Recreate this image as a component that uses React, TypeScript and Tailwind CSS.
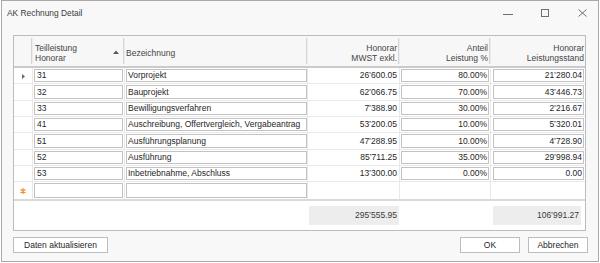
import React from "react";

const rows = [
  ["31", "Vorprojekt", "26’600.05", "80.00%", "21’280.04"],
  ["32", "Bauprojekt", "62’066.75", "70.00%", "43’446.73"],
  ["33", "Bewilligungsverfahren", "7’388.90", "30.00%", "2’216.67"],
  ["41", "Auschreibung, Offertvergleich, Vergabeantrag", "53’200.05", "10.00%", "5’320.01"],
  ["51", "Ausführungsplanung", "47’288.95", "10.00%", "4’728.90"],
  ["52", "Ausführung", "85’711.25", "35.00%", "29’998.94"],
  ["53", "Inbetriebnahme, Abschluss", "13’300.00", "0.00%", "0.00"],
];

const heights = ["h-[16px]", "h-[17px]", "h-[16px]", "h-[16px]", "h-[17px]", "h-[16px]", "h-[16px]", "h-[17px]"];

function Box({ children, right = false, pad = "px-[2px]" }: { children?: React.ReactNode; right?: boolean; pad?: string }) {
  return (
    <div
      className={`h-full border border-[#c2c2c2] bg-white flex items-center ${pad} whitespace-nowrap overflow-hidden ${
        right ? "justify-end" : ""
      }`}
    >
      {children}
    </div>
  );
}

function HeaderCell({
  w,
  children,
  right = false,
  divider = true,
  pad = "",
}: {
  w: string;
  children?: React.ReactNode;
  right?: boolean;
  divider?: boolean;
  pad?: string;
}) {
  return (
    <div className={`${w} flex items-stretch shrink-0`}>
      <div className={`flex-1 flex items-center pt-[3px] leading-[10px] ${right ? "justify-end text-right" : ""} ${pad}`}>
        {children}
      </div>
      {divider && <div className="w-[2px] my-[2px] bg-[#d6d6d6] border-r border-[#ececec]" />}
    </div>
  );
}

export default function App() {
  return (
    <div className="w-[600px] h-[263px] bg-white font-['Liberation_Sans',Arial,sans-serif] text-[8.5px] text-[#262626]">
      <div className="ml-px w-[598px] h-[262px] border border-[#a9a9a9] bg-[#f8f8f8] flex flex-col">
        {/* Title bar */}
        <div className="h-[24px] flex items-center pl-[5px] pr-[11px] shrink-0">
          <span className="text-[8.4px] text-[#3a3a3a]">AK Rechnung Detail</span>
          <div className="ml-auto flex items-center">
            <svg width="10" height="8" viewBox="0 0 10 8" className="mt-[1px]">
              <line x1="0" y1="4.5" x2="10" y2="4.5" stroke="#6f6f6f" strokeWidth="1" />
            </svg>
            <svg width="8" height="8" viewBox="0 0 8 8" className="ml-[28px]">
              <rect x="0.5" y="0.5" width="7" height="7" fill="none" stroke="#6f6f6f" strokeWidth="1" />
            </svg>
            <svg width="9" height="8" viewBox="0 0 9 8" className="ml-[29px]">
              <path d="M0.5 0.5 L8.5 7.5 M8.5 0.5 L0.5 7.5" stroke="#6f6f6f" strokeWidth="1" />
            </svg>
          </div>
        </div>

        {/* Grid */}
        <div className="mt-[10px] ml-[11px] w-[573px] h-[196px] border border-[#bcbcbc] bg-white flex flex-col shrink-0">
          {/* Header */}
          <div className="h-[32px] bg-[#f7f7f7] border-b-2 border-[#cbcbcb] flex text-[#454545] shrink-0">
            <HeaderCell w="w-[19px]" />
            <HeaderCell w="w-[92px]" pad="pl-[2px]">
              <div className="flex-1">
                <div>Teilleistung</div>
                <div>Honorar</div>
              </div>
              <svg width="6" height="4" viewBox="0 0 6 4" className="mr-[4px] -mt-[2px]">
                <path d="M0 4 L3 0.5 L6 4 Z" fill="#5a5a5a" />
              </svg>
            </HeaderCell>
            <HeaderCell w="w-[183px]" pad="pl-[1px]">
              Bezeichnung
            </HeaderCell>
            <HeaderCell w="w-[92px]" right pad="pr-[1px]">
              <div>
                <div>Honorar</div>
                <div>MWST exkl.</div>
              </div>
            </HeaderCell>
            <HeaderCell w="w-[91px]" right pad="pr-[1px]">
              <div>
                <div>Anteil</div>
                <div>Leistung %</div>
              </div>
            </HeaderCell>
            <HeaderCell w="w-[94px]" right divider={false} pad="pr-[1px]">
              <div>
                <div>Honorar</div>
                <div>Leistungsstand</div>
              </div>
            </HeaderCell>
          </div>

          {/* Rows */}
          {rows.map((r, i) => (
            <div key={i} className={`${heights[i]} flex border-b border-[#e9e9e9] shrink-0`}>
              <div className="w-[19px] border-r border-[#e9e9e9] flex items-center justify-center shrink-0">
                {i === 0 && (
                  <svg width="3" height="5" viewBox="0 0 3 5" className="mt-[1px]">
                    <path d="M0 0 L3 2.5 L0 5 Z" fill="#6a6a6a" />
                  </svg>
                )}
              </div>
              <div className="w-[92px] p-px pr-[1px] border-r border-[#e9e9e9] shrink-0">
                <Box>{r[0]}</Box>
              </div>
              <div className="w-[183px] py-px pl-px border-r border-[#e9e9e9] shrink-0">
                <Box pad="px-[1px]">{r[1]}</Box>
              </div>
              <div className="w-[92px] flex items-center justify-end pr-[2px] border-r border-[#e9e9e9] shrink-0">
                {r[2]}
              </div>
              <div className="w-[91px] p-px border-r border-[#e9e9e9] shrink-0">
                <Box right pad="px-[1px]">{r[3]}</Box>
              </div>
              <div className="w-[94px] p-px pl-[2px] shrink-0">
                <Box right pad="px-[1px]">{r[4]}</Box>
              </div>
            </div>
          ))}

          {/* New item row */}
          <div className={`${heights[7]} flex shrink-0`}>
            <div className="w-[19px] border-r border-[#e9e9e9] flex items-center justify-center shrink-0">
              <svg width="6" height="6" viewBox="0 0 6 6" className="mt-[1px]">
                <path
                  d="M3 0 L3 6 M0.4 1.5 L5.6 4.5 M0.4 4.5 L5.6 1.5"
                  stroke="#f0902a"
                  strokeWidth="1.2"
                />
              </svg>
            </div>
            <div className="w-[92px] p-px border-r border-[#e9e9e9] shrink-0">
              <Box />
            </div>
            <div className="w-[183px] py-px pl-px border-r border-[#e9e9e9] shrink-0">
              <Box />
            </div>
            <div className="w-[92px] border-r border-[#e9e9e9] shrink-0" />
            <div className="w-[91px] border-r border-[#e9e9e9] shrink-0" />
            <div className="w-[94px] shrink-0" />
          </div>

          {/* Footer */}
          <div className="flex-1 border-t-2 border-[#dadada] flex">
            <div className="w-[19px] shrink-0" />
            <div className="w-[92px] shrink-0" />
            <div className="w-[183px] shrink-0" />
            <div className="w-[92px] shrink-0 pt-[5px] pl-px">
              <div className="w-[90px] h-[19px] bg-[#ededed] flex items-center justify-end pr-[2px] text-[#3a3a3a]">
                295’555.95
              </div>
            </div>
            <div className="w-[91px] shrink-0" />
            <div className="w-[94px] shrink-0 pt-[5px] pl-[2px]">
              <div className="w-[88px] h-[19px] bg-[#ededed] flex items-center justify-end pr-[2px] text-[#3a3a3a]">
                106’991.27
              </div>
            </div>
          </div>
        </div>

        {/* Buttons */}
        <div className="mt-[6px] ml-[11px] mr-[10px] flex items-center">
          <button className="w-[95px] h-[16px] border border-[#bdbdbd] bg-white flex items-center justify-center text-[#262626]">
            Daten aktualisieren
          </button>
          <button className="ml-auto w-[60px] h-[16px] border border-[#bdbdbd] bg-white flex items-center justify-center text-[#262626]">
            OK
          </button>
          <button className="ml-[8px] w-[60px] h-[16px] border border-[#bdbdbd] bg-white flex items-center justify-center text-[#262626]">
            Abbrechen
          </button>
        </div>
      </div>
    </div>
  );
}
